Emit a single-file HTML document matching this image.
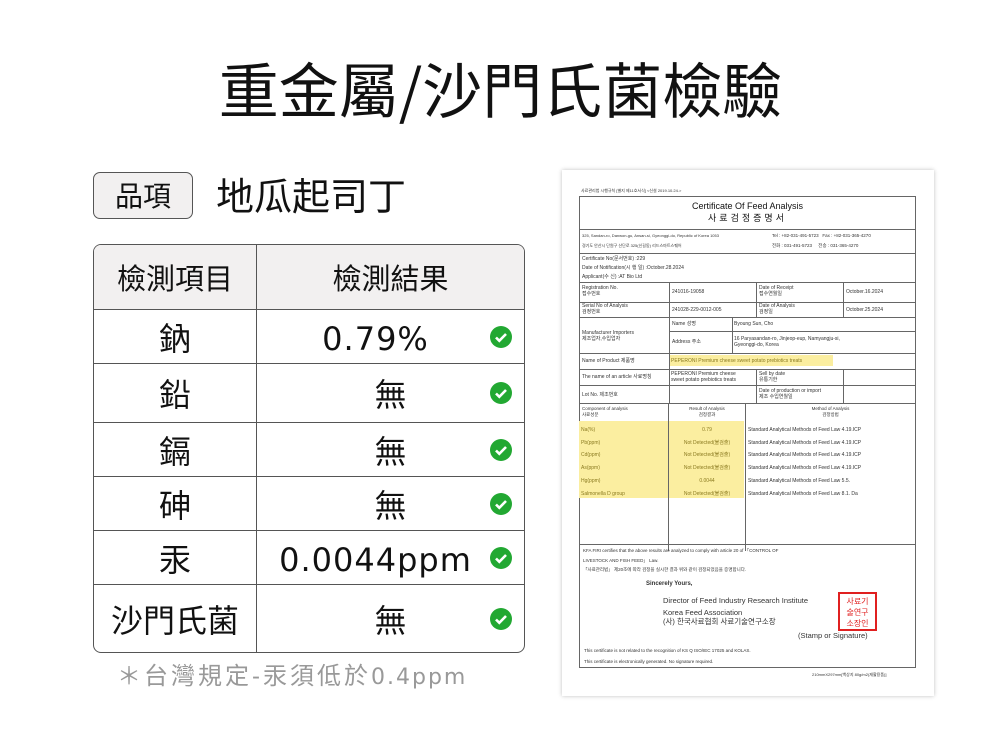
<!DOCTYPE html>
<html><head><meta charset="utf-8"><style>
*{margin:0;padding:0;box-sizing:border-box}
body{width:1001px;height:751px;background:#fff;position:relative;overflow:hidden;font-family:"Liberation Sans","Noto Sans CJK TC",sans-serif;color:#111}
.a{position:absolute;white-space:nowrap}
.title{left:0;width:1001px;top:50px;text-align:center;font-size:60px;line-height:76px;font-family:"Noto Sans CJK TC",sans-serif}
.tag{left:93px;top:172px;width:100px;height:47px;border:1.5px solid #555;border-radius:7px;background:#f2f0f0;font-size:28px;text-align:center;line-height:44px;font-family:"Noto Sans CJK TC",sans-serif}
.prod{left:216px;top:168px;font-size:38px;line-height:52px;font-family:"Noto Sans CJK TC",sans-serif}
table.m{position:absolute;left:93px;top:244px;width:432px;height:408px;border-collapse:separate;border-spacing:0;border:1.5px solid #555;border-radius:8px;overflow:hidden;font-family:"Noto Sans CJK TC",sans-serif}
table.m td{border-top:1.5px solid #555;text-align:center;font-size:32px;position:relative}
table.m tr:first-child td{border-top:none;background:#f2f0f0;font-size:29px}
table.m td:first-child{border-right:1.5px solid #555;width:163px}
.r{font-family:"DejaVu Sans","Liberation Sans",sans-serif;font-weight:400;letter-spacing:1px}
.ck{position:absolute;right:12px;top:50%;margin-top:-11px;width:22px;height:22px}
.note{left:117px;top:660px;font-size:24px;color:#999;line-height:34px;letter-spacing:3px}
.note span{font-family:"DejaVu Sans",sans-serif;font-size:22px;letter-spacing:2px}
.paper{left:562px;top:170px;width:372px;height:526px;background:#fff;box-shadow:0 0 4px rgba(0,0,0,.25)}
.c{position:absolute;font-size:5px;color:#333;white-space:nowrap;line-height:6px;font-family:"Liberation Sans","Noto Sans CJK KR",sans-serif}
.ln{position:absolute;background:#666}
</style></head><body>
<div class="a title">重金屬/沙門氏菌檢驗</div>
<div class="a tag">品項</div>
<div class="a prod">地瓜起司丁</div>
<table class="m">
<tr style="height:64px"><td>檢測項目</td><td>檢測結果</td></tr>
<tr style="height:54px"><td>鈉</td><td><span class="r" style="margin-right:30px">0.79%</span><svg class="ck" viewBox="0 0 22 22"><circle cx="11" cy="11" r="11" fill="#22a832"/><path d="M6 11.5l3.3 3.3L16 8" stroke="#fff" stroke-width="2.6" fill="none"/></svg></td></tr>
<tr style="height:59px"><td>鉛</td><td>無<svg class="ck" viewBox="0 0 22 22"><circle cx="11" cy="11" r="11" fill="#22a832"/><path d="M6 11.5l3.3 3.3L16 8" stroke="#fff" stroke-width="2.6" fill="none"/></svg></td></tr>
<tr style="height:54px"><td>鎘</td><td>無<svg class="ck" viewBox="0 0 22 22"><circle cx="11" cy="11" r="11" fill="#22a832"/><path d="M6 11.5l3.3 3.3L16 8" stroke="#fff" stroke-width="2.6" fill="none"/></svg></td></tr>
<tr style="height:54px"><td>砷</td><td>無<svg class="ck" viewBox="0 0 22 22"><circle cx="11" cy="11" r="11" fill="#22a832"/><path d="M6 11.5l3.3 3.3L16 8" stroke="#fff" stroke-width="2.6" fill="none"/></svg></td></tr>
<tr style="height:54px"><td>汞</td><td><span class="r" style="margin-right:30px">0.0044ppm</span><svg class="ck" viewBox="0 0 22 22"><circle cx="11" cy="11" r="11" fill="#22a832"/><path d="M6 11.5l3.3 3.3L16 8" stroke="#fff" stroke-width="2.6" fill="none"/></svg></td></tr>
<tr style="height:68px"><td>沙門氏菌</td><td>無<svg class="ck" viewBox="0 0 22 22"><circle cx="11" cy="11" r="11" fill="#22a832"/><path d="M6 11.5l3.3 3.3L16 8" stroke="#fff" stroke-width="2.6" fill="none"/></svg></td></tr>
</table>
<div class="a note">＊台灣規定-汞須低於<span>0.4ppm</span></div>

<div class="a paper"></div>
<div style="position:absolute;left:579px;top:196px;width:337px;height:472px;border:1px solid #666"></div>
<div style="position:absolute;left:579px;top:421px;width:165px;height:77px;background:#fbeea0"></div>
<div style="position:absolute;left:670px;top:355px;width:163px;height:11px;background:#fbeea0"></div>
<div class="ln" style="left:579px;top:229px;width:337px;height:1px"></div>
<div class="ln" style="left:579px;top:253px;width:337px;height:1px"></div>
<div class="ln" style="left:579px;top:282px;width:337px;height:1px"></div>
<div class="ln" style="left:579px;top:302px;width:337px;height:1px"></div>
<div class="ln" style="left:579px;top:317px;width:337px;height:1px"></div>
<div class="ln" style="left:669px;top:331px;width:247px;height:1px"></div>
<div class="ln" style="left:579px;top:353px;width:337px;height:1px"></div>
<div class="ln" style="left:579px;top:369px;width:337px;height:1px"></div>
<div class="ln" style="left:579px;top:385px;width:337px;height:1px"></div>
<div class="ln" style="left:579px;top:403px;width:337px;height:1px"></div>
<div class="ln" style="left:579px;top:544px;width:337px;height:1px"></div>
<div class="ln" style="left:669px;top:282px;width:1px;height:121px"></div>
<div class="ln" style="left:756px;top:282px;width:1px;height:35px"></div>
<div class="ln" style="left:843px;top:282px;width:1px;height:35px"></div>
<div class="ln" style="left:732px;top:317px;width:1px;height:36px"></div>
<div class="ln" style="left:756px;top:369px;width:1px;height:34px"></div>
<div class="ln" style="left:843px;top:369px;width:1px;height:34px"></div>
<div class="ln" style="left:668px;top:403px;width:1px;height:148px"></div>
<div class="ln" style="left:745px;top:403px;width:1px;height:148px"></div>

<div class="c" style="left:581px;top:188px;font-size:4px">사료관리법 시행규칙 [별지 제11호서식] &lt;신설 2019.10.24.&gt;</div>
<div class="c" style="left:579px;width:337px;text-align:center;top:201px;font-size:9px;line-height:10px;color:#111">Certificate Of Feed Analysis</div>
<div class="c" style="left:579px;width:337px;text-align:center;top:213px;font-size:9px;line-height:11px;color:#111;letter-spacing:3px">사료검정증명서</div>
<div class="c" style="left:582px;top:233px;font-size:4px">325, Sandan-ro, Danwon-gu, Ansan-si, Gyeonggi-do, Republic of Korea 1053</div>
<div class="c" style="left:772px;top:233px;font-size:4.5px">Tel : +82-031-491-5723 &nbsp; Fax : +82-031-365-4270</div>
<div class="c" style="left:582px;top:243px;font-size:4px">경기도 안산시 단원구 산단로 325(신길동) 리드스마트스퀘어</div>
<div class="c" style="left:772px;top:243px;font-size:4.5px">전화 : 031-491-5723 &nbsp; &nbsp; 전송 : 031-365-4270</div>
<div class="c" style="left:582px;top:256px">Certificate No(문서번호) :229</div>
<div class="c" style="left:582px;top:265px">Date of Notification(시 행 일) :October.28.2024</div>
<div class="c" style="left:582px;top:274px">Applicant(수 신) :AT Bio Ltd</div>
<div class="c" style="left:582px;top:285px">Registration No.<br>접수번호</div>
<div class="c" style="left:672px;top:289px">241016-19058</div>
<div class="c" style="left:759px;top:285px">Date of Receipt<br>접수연월일</div>
<div class="c" style="left:846px;top:289px">October.16.2024</div>
<div class="c" style="left:582px;top:303px">Serial No of Analysis<br>검정번호</div>
<div class="c" style="left:672px;top:307px">241028-229-0012-005</div>
<div class="c" style="left:759px;top:303px">Date of Analysis<br>검정일</div>
<div class="c" style="left:846px;top:307px">October.25.2024</div>
<div class="c" style="left:582px;top:330px">Manufacturer Importers<br>제조업자,수입업자</div>
<div class="c" style="left:672px;top:321px">Name 성명</div>
<div class="c" style="left:734px;top:321px">Byoung Sun, Cho</div>
<div class="c" style="left:672px;top:339px">Address 주소</div>
<div class="c" style="left:734px;top:336px">16 Paryasandan-ro, Jinjeop-eup, Namyangju-si,<br>Gyeonggi-do, Korea</div>
<div class="c" style="left:582px;top:358px">Name of Product 제품명</div>
<div class="c" style="left:671px;top:358px;color:#8a7a20">PEPERONI Premium cheese sweet potato prebiotics treats</div>
<div class="c" style="left:582px;top:374px">The name of an article 사료명칭</div>
<div class="c" style="left:671px;top:371px">PEPERONI Premium cheese<br>sweet potato prebiotics treats</div>
<div class="c" style="left:759px;top:371px">Sell by date<br>유통기한</div>
<div class="c" style="left:582px;top:392px">Lot No. 제조번호</div>
<div class="c" style="left:759px;top:388px">Date of production or import<br>제조 수입연월일</div>
<div class="c" style="left:582px;top:406px;font-size:4.5px">Component of analysis<br>사료성분</div>
<div class="c" style="left:669px;width:76px;text-align:center;top:406px;font-size:4.5px">Result of Analysis<br>검정결과</div>
<div class="c" style="left:745px;width:171px;text-align:center;top:406px;font-size:4.5px">Method of Analysis<br>검정방법</div>
<div class="c" style="left:581px;top:424px;color:#8a7a20;line-height:12.7px">Na(%)<br>Pb(ppm)<br>Cd(ppm)<br>As(ppm)<br>Hg(ppm)<br>Salmonella D group</div>
<div class="c" style="left:669px;width:76px;text-align:center;top:424px;color:#8a7a20;line-height:12.7px">0.79<br>Not Detected(불검출)<br>Not Detected(불검출)<br>Not Detected(불검출)<br>0.0044<br>Not Detected(불검출)</div>
<div class="c" style="left:748px;top:424px;line-height:12.7px">Standard Analytical Methods of Feed Law 4.19.ICP<br>Standard Analytical Methods of Feed Law 4.19.ICP<br>Standard Analytical Methods of Feed Law 4.19.ICP<br>Standard Analytical Methods of Feed Law 4.19.ICP<br>Standard Analytical Methods of Feed Law 5.5.<br>Standard Analytical Methods of Feed Law 8.1. Da</div>
<div class="c" style="left:583px;top:548px;font-size:4.5px">KFA FIRI certifies that the above results are analyzed to comply with article 20 of 「CONTROL OF</div>
<div class="c" style="left:583px;top:558px;font-size:4.5px">LIVESTOCK AND FISH FEED」 Law.</div>
<div class="c" style="left:583px;top:567px;font-size:4.5px">「사료관리법」 제20조에 따라 검정을 실시한 결과 위와 같이 검정되었음을 증명합니다.</div>
<div class="c" style="left:646px;top:581px;font-size:6px;font-weight:bold;line-height:7px">Sincerely Yours,</div>
<div class="c" style="left:663px;top:596px;font-size:7.5px;line-height:9px">Director of Feed Industry Research Institute</div>
<div class="c" style="left:663px;top:608px;font-size:7.5px;line-height:9px">Korea Feed Association</div>
<div class="c" style="left:663px;top:617px;font-size:7.5px;line-height:9px">(사) 한국사료협회 사료기술연구소장</div>
<div class="c" style="left:798px;top:631px;font-size:7.5px;line-height:9px">(Stamp or Signature)</div>
<div style="position:absolute;left:838px;top:592px;width:39px;height:39px;border:2px solid #e02020;color:#e02020;font-size:8px;line-height:11px;text-align:center;font-family:'Noto Sans CJK KR',sans-serif;padding-top:2px;overflow:hidden">사료기<br>술연구<br>소장인</div>
<div class="c" style="left:584px;top:648px;font-size:4.5px">This certificate is not related to the recognition of KS Q ISO/IEC 17025 and KOLAS.</div>
<div class="c" style="left:584px;top:659px;font-size:4.5px">This certificate is electronically generated. No signature required.</div>
<div class="c" style="left:812px;top:672px;font-size:4px">210mmX297mm[백상지 80g/m2(재활용품)]</div>
</body></html>
